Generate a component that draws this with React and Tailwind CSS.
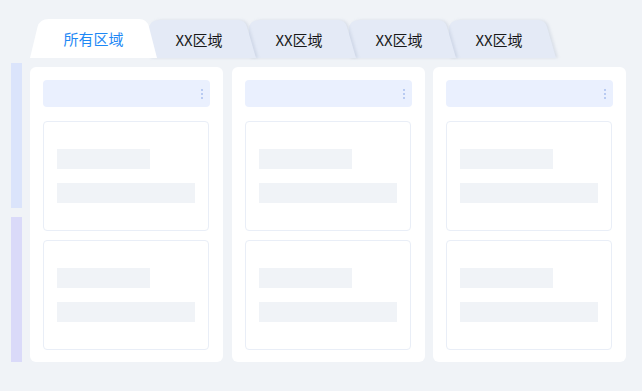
import React from 'react';

const tabs = ['XX区域', 'XX区域', 'XX区域', 'XX区域'];

const ActiveTab = ({ label }) => (
    <div className="relative z-50 flex h-[39px] w-[127px] shrink-0 items-center justify-center pt-[2px]">
        <svg className="absolute inset-0" width="127" height="39" viewBox="0 0 127 39">
            <path d="M0 39 L7.5 8 Q9.5 0 19 0 L109 0 Q117 0 119 8 L127 39 Z" fill="#ffffff" />
        </svg>
        <span className="relative text-[15px] text-[#1e88f5]">{label}</span>
    </div>
);

const Tab = ({ label, z }) => (
    <div className={`relative -ml-[8px] flex h-[38px] w-[108px] shrink-0 items-center justify-center pt-[2px] ${z}`}>
        <svg
            className="absolute inset-0 drop-shadow-[2px_0_1.5px_rgba(90,110,150,0.15)]"
            width="108"
            height="38"
            viewBox="0 0 108 38"
        >
            <path d="M0 38 V10 Q0 0 10 0 H89 Q96 0 98 7 L107 38 Z" fill="#e4eaf6" />
        </svg>
        <span className="relative -ml-[8px] text-[15px] text-[#1a1a1a]">{label}</span>
    </div>
);

const Dots = () => (
    <div className="flex flex-col gap-[2px]">
        <span className="h-[2px] w-[2px] bg-[#b9cbf2]" />
        <span className="h-[2px] w-[2px] bg-[#b9cbf2]" />
        <span className="h-[2px] w-[2px] bg-[#b9cbf2]" />
    </div>
);

const SkeletonCard = () => (
    <div className="h-[110px] w-[166px] rounded-[4px] border border-[#e9eef7] bg-white px-[13px] pt-[27px]">
        <div className="h-[20px] w-[93px] bg-[#f0f3f7]" />
        <div className="mt-[14px] h-[20px] w-[138px] bg-[#f0f3f7]" />
    </div>
);

const Column = () => (
    <div className="flex h-[295px] w-[193px] flex-col rounded-[6px] bg-white px-[13px] pt-[13px]">
        <div className="flex h-[27px] items-center justify-end rounded-[4px] bg-[#eaf0fe] pr-[7px]">
            <Dots />
        </div>
        <div className="mt-[14px] flex flex-col gap-[9px]">
            <SkeletonCard />
            <SkeletonCard />
        </div>
    </div>
);

export default function App() {
    const zs = ['z-40', 'z-30', 'z-20', 'z-10'];
    return (
        <div
            className="h-[391px] w-[642px] overflow-hidden bg-[#f0f3f7]"
            style={{ fontFamily: '"Noto Sans CJK SC", "Noto Sans", sans-serif' }}
        >
            <div className="flex items-end pl-[30px] pt-[19px]">
                <ActiveTab label="所有区域" />
                {tabs.map((t, i) => (
                    <Tab key={i} label={t} z={zs[i]} />
                ))}
            </div>
            <div className="mt-[5px] flex pl-[11px]">
                <div className="flex w-[11px] flex-col gap-[9px]">
                    <div className="h-[145px] bg-[#dbe4fb]" />
                    <div className="h-[145px] bg-[#dadaf9]" />
                </div>
                <div className="ml-[8px] mt-[4px] flex gap-[8.5px]">
                    <Column />
                    <Column />
                    <Column />
                </div>
            </div>
        </div>
    );
}
